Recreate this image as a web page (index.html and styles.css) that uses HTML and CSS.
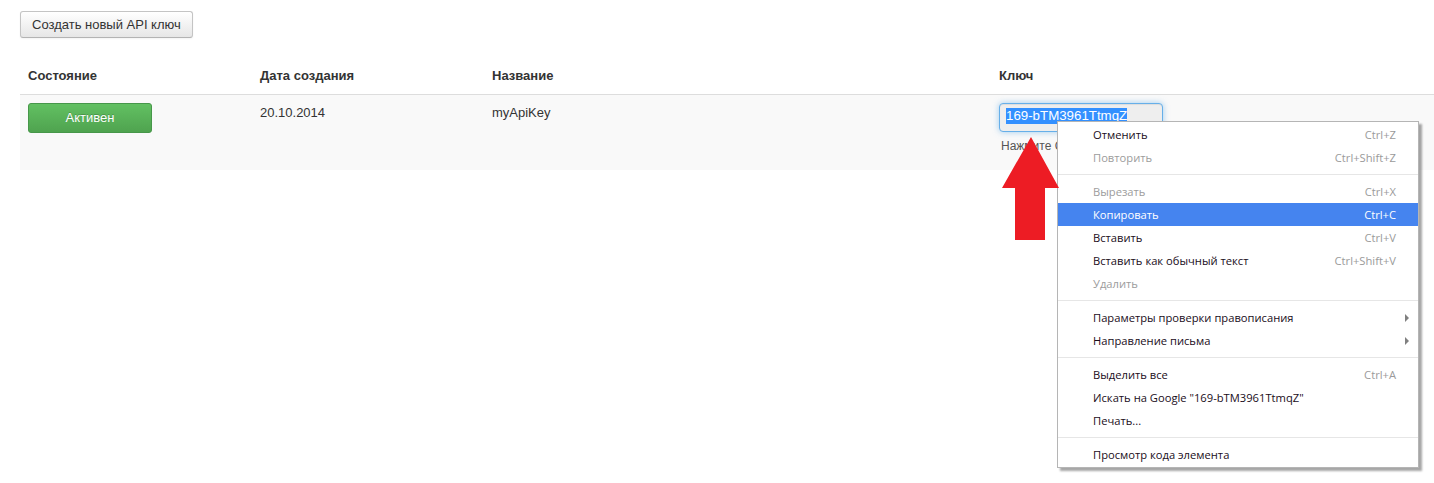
FILE: index.html
```html
<!DOCTYPE html>
<html lang="ru">
<head>
<meta charset="utf-8">
<title>API ключи</title>
<link rel="stylesheet" href="styles.css">
</head>
<body>
<div class="page">
  <button class="btn-create" type="button">Создать новый API ключ</button>
  <table class="keys">
    <thead>
      <tr>
        <th class="c-state">Состояние</th>
        <th class="c-date">Дата создания</th>
        <th class="c-name">Название</th>
        <th class="c-key">Ключ</th>
      </tr>
    </thead>
    <tbody>
      <tr>
        <td><button class="btn-active" type="button">Активен</button></td>
        <td>20.10.2014</td>
        <td>myApiKey</td>
        <td>
          <div class="key-input"><span class="sel">169-bTM3961TtmqZ</span></div>
          <div class="hint">Нажмите Ctrl+C</div>
        </td>
      </tr>
    </tbody>
  </table>
</div>

<svg class="arrow" width="58" height="104" viewBox="0 0 58 104" aria-hidden="true">
  <polygon points="29,0 0,51 13,51 13,103 43,103 43,51 57,51" fill="#ed1c24"/>
</svg>

<div class="ctx-menu">
  <div class="item"><span>Отменить</span><span class="kbd">Ctrl+Z</span></div>
  <div class="item disabled"><span>Повторить</span><span class="kbd">Ctrl+Shift+Z</span></div>
  <div class="sep"></div>
  <div class="item disabled"><span>Вырезать</span><span class="kbd">Ctrl+X</span></div>
  <div class="item active"><span>Копировать</span><span class="kbd">Ctrl+C</span></div>
  <div class="item"><span>Вставить</span><span class="kbd">Ctrl+V</span></div>
  <div class="item"><span>Вставить как обычный текст</span><span class="kbd">Ctrl+Shift+V</span></div>
  <div class="item disabled"><span>Удалить</span></div>
  <div class="sep"></div>
  <div class="item sub"><span>Параметры проверки правописания</span></div>
  <div class="item sub"><span>Направление письма</span></div>
  <div class="sep"></div>
  <div class="item"><span>Выделить все</span><span class="kbd">Ctrl+A</span></div>
  <div class="item"><span>Искать на Google "169-bTM3961TtmqZ"</span></div>
  <div class="item"><span>Печать...</span></div>
  <div class="sep"></div>
  <div class="item"><span>Просмотр кода элемента</span></div>
</div>
</body>
</html>
```

FILE: styles.css
```css
html, body {
  margin: 0;
  padding: 0;
  background: #fff;
}

body {
  font-family: "Liberation Sans", Arial, sans-serif;
  font-size: 13px;
  color: #333;
  overflow: hidden;
}

.page {
  padding: 11px 0 0 20px;
}

.btn-create {
  display: block;
  height: 27px;
  padding: 0 11px;
  font-family: "Liberation Sans", Arial, sans-serif;
  font-size: 13px;
  color: #333;
  background: linear-gradient(#ffffff, #e6e6e6);
  border: 1px solid #c4c4c4;
  border-bottom-color: #b3b3b3;
  border-radius: 3px;
  box-shadow: inset 0 1px 0 rgba(255,255,255,.2), 0 1px 2px rgba(0,0,0,.05);
}

.keys {
  margin-top: 20px;
  width: 100%;
  border-collapse: collapse;
}

.keys th {
  text-align: left;
  padding: 8px;
  line-height: 20px;
  font-size: 13px;
  font-weight: bold;
  color: #333;
  border-bottom: 1px solid #dddddd;
}

.keys .c-state,
.keys .c-date { width: 216px; }
.keys .c-name { width: 491px; }

.keys td {
  padding: 8px;
  line-height: 20px;
  height: 59px;
  vertical-align: top;
  background: #f9f9f9;
  color: #333;
}

.btn-active {
  display: block;
  width: 124px;
  height: 30px;
  padding: 0 0 2px;
  font-family: "Liberation Sans", Arial, sans-serif;
  font-size: 13px;
  color: #fff;
  text-shadow: 0 -1px 0 rgba(0,0,0,.2);
  background: linear-gradient(#62c062, #4fa34f);
  border: 1px solid #47974a;
  border-radius: 3px;
}

.key-input {
  width: 164px;
  height: 29px;
  box-sizing: border-box;
  padding: 4px 6px 0;
  background: #eeeeee;
  border: 1px solid #66afe9;
  border-radius: 4px;
  box-shadow: inset 0 1px 1px rgba(0,0,0,.075), 0 0 6px rgba(102,175,233,.6);
  font-size: 13.3px;
  line-height: 16px;
}

.sel {
  background: #3390ff;
  color: #fff;
  padding-bottom: 1px;
}

.hint {
  width: 56px;
  overflow: hidden;
  margin-top: 5px;
  padding-left: 2px;
  font-size: 12px;
  line-height: 18px;
  color: #555;
  white-space: nowrap;
}

.arrow {
  position: absolute;
  left: 1002px;
  top: 137px;
  z-index: 3;
}

.ctx-menu {
  position: absolute;
  left: 1057px;
  top: 121px;
  width: 362px;
  box-sizing: border-box;
  padding: 1px 0;
  background: #fff;
  border: 1px solid #b5b5b5;
  box-shadow: 3px 3px 2px rgba(0,0,0,.35);
  font-family: "Open Sans", "Noto Sans", sans-serif;
  font-size: 11.2px;
  color: #1a0d1a;
  z-index: 2;
}

.item {
  position: relative;
  display: flex;
  justify-content: space-between;
  align-items: center;
  height: 23px;
  padding: 0 22px 0 35px;
  white-space: nowrap;
}

.item .kbd {
  color: #9a9a9a;
}

.item.disabled {
  color: #9c9c9c;
}

.item.active {
  background: #4584ef;
  color: #fff;
}

.item.active .kbd {
  color: #fff;
}

.item.sub::after {
  content: "";
  position: absolute;
  right: 9px;
  top: 8px;
  border-left: 4px solid #808080;
  border-top: 4px solid transparent;
  border-bottom: 4px solid transparent;
}

.sep {
  height: 11px;
  box-sizing: border-box;
  border-top: 5px solid #fff;
  border-bottom: 5px solid #fff;
  background: #e6e6e6;
}
```
